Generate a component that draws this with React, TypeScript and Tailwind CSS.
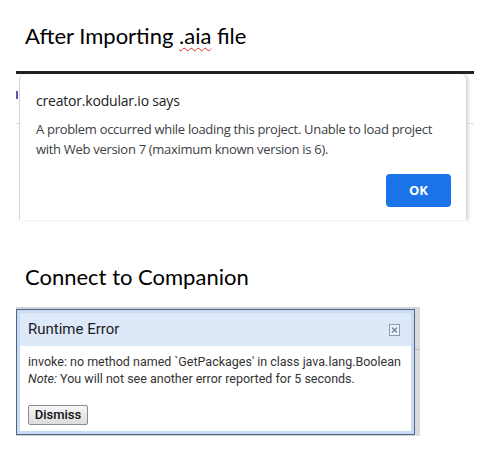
import React from "react";

const titleFont = { fontFamily: "Lato, 'Open Sans', sans-serif" };
const chromeFont = { fontFamily: "'Open Sans', 'Noto Sans', sans-serif" };
const roboto = { fontFamily: "Roboto, 'Liberation Sans', sans-serif" };

function KodularAlert() {
  return (
    <div className="ml-[16px] flex h-[149px] w-[458px] flex-col bg-white">
      <div className="h-[3px] w-full bg-[#202124]" />
      <div className="flex flex-1">
        <div className="flex w-[3px] flex-col">
          <div className="mt-[17px] h-[8px] w-[2px] bg-[#6b4fb3]" />
          <div className="mt-[24px] h-px w-full bg-[#dadce0]" />
        </div>
        <div
          className="flex w-[448px] flex-col rounded-tl-[6px] rounded-tr-[6px] border-l border-r border-[#d5d5d5] bg-white pl-[16px] pr-[15px] pt-[17px] text-[#202124] shadow-[2px_0_3px_rgba(0,0,0,0.12)]"
          style={chromeFont}
        >
          <div className="text-[14px] leading-[20px] tracking-[-0.2px]">creator.kodular.io says</div>
          <p className="mt-[8px] whitespace-nowrap text-[13px] leading-[20px] tracking-[-0.3px] text-[#3c4043]">
            A problem occurred while loading this project. Unable to load project
            <br />
            with Web version 7 (maximum known version is 6).
          </p>
          <div className="mt-[15px] flex justify-end">
            <button className="flex h-[33px] w-[65px] items-center justify-center rounded-[4px] bg-[#1a73e8] text-[13px] font-bold text-white">
              OK
            </button>
          </div>
        </div>
        <div className="flex flex-1 flex-col">
          <div className="mt-[49px] h-px w-full bg-[#dadce0]" />
        </div>
      </div>
    </div>
  );
}

function CloseBox() {
  return (
    <svg width="11" height="12" viewBox="0 0 11 12" className="block">
      <rect x="0.5" y="0.5" width="10" height="11" fill="#eef3fb" stroke="#8a9bb3" />
      <path d="M3 3.5 L8 8.5 M8 3.5 L3 8.5" stroke="#6f819b" strokeWidth="1.3" />
    </svg>
  );
}

function RuntimeError() {
  return (
    <div className="ml-[16px] flex h-[129px] w-[404px] bg-[#cfd3d8] pt-[2px]">
      <div className="flex h-[126px] w-[399px] shrink-0 flex-col border border-[#4f6580] bg-[#c8dbf3] p-[3px]" style={roboto}>
        <div className="flex h-[33px] shrink-0 items-center justify-between bg-[#dde9f9] pl-[8px] pr-[11px]">
          <span className="text-[15px] text-[#1c1c1c]">Runtime Error</span>
          <CloseBox />
        </div>
        <div className="flex flex-1 flex-col bg-white px-[8px] pt-[7px]">
          <p className="whitespace-nowrap text-[12.5px] leading-[17px] text-[#333]">
            invoke: no method named `GetPackages' in class java.lang.Boolean
            <br />
            <i>Note:</i> You will not see another error reported for 5 seconds.
          </p>
          <div className="mt-[15px]">
            <button className="h-[20px] w-[60px] rounded-[2px] border border-[#8a8a8a] bg-gradient-to-b from-[#f6f6f6] to-[#dcdcdc] text-[13px] font-medium leading-[18px] text-[#111]">
              Dismiss
            </button>
          </div>
        </div>
      </div>
      <div className="flex flex-1 flex-col bg-[#d9dcdf]">
        <div className="mt-[40px] h-px w-full bg-[#b9bdc2]" />
      </div>
    </div>
  );
}

export default function App() {
  return (
    <div className="flex h-[473px] w-[477px] flex-col overflow-hidden bg-white">
      <h1 className="ml-[25px] mt-[22px] text-[22px] leading-[28px] text-black" style={titleFont}>
        After Importing{" "}
        <span className="underline decoration-[#d93025] decoration-wavy decoration-1 underline-offset-[3px]">.aia</span>{" "}
        file
      </h1>
      <div className="mt-[21px]">
        <KodularAlert />
      </div>
      <h2 className="ml-[25px] mt-[43px] text-[22px] leading-[28px] text-black" style={titleFont}>
        Connect to Companion
      </h2>
      <div className="mt-[16px]">
        <RuntimeError />
      </div>
    </div>
  );
}
